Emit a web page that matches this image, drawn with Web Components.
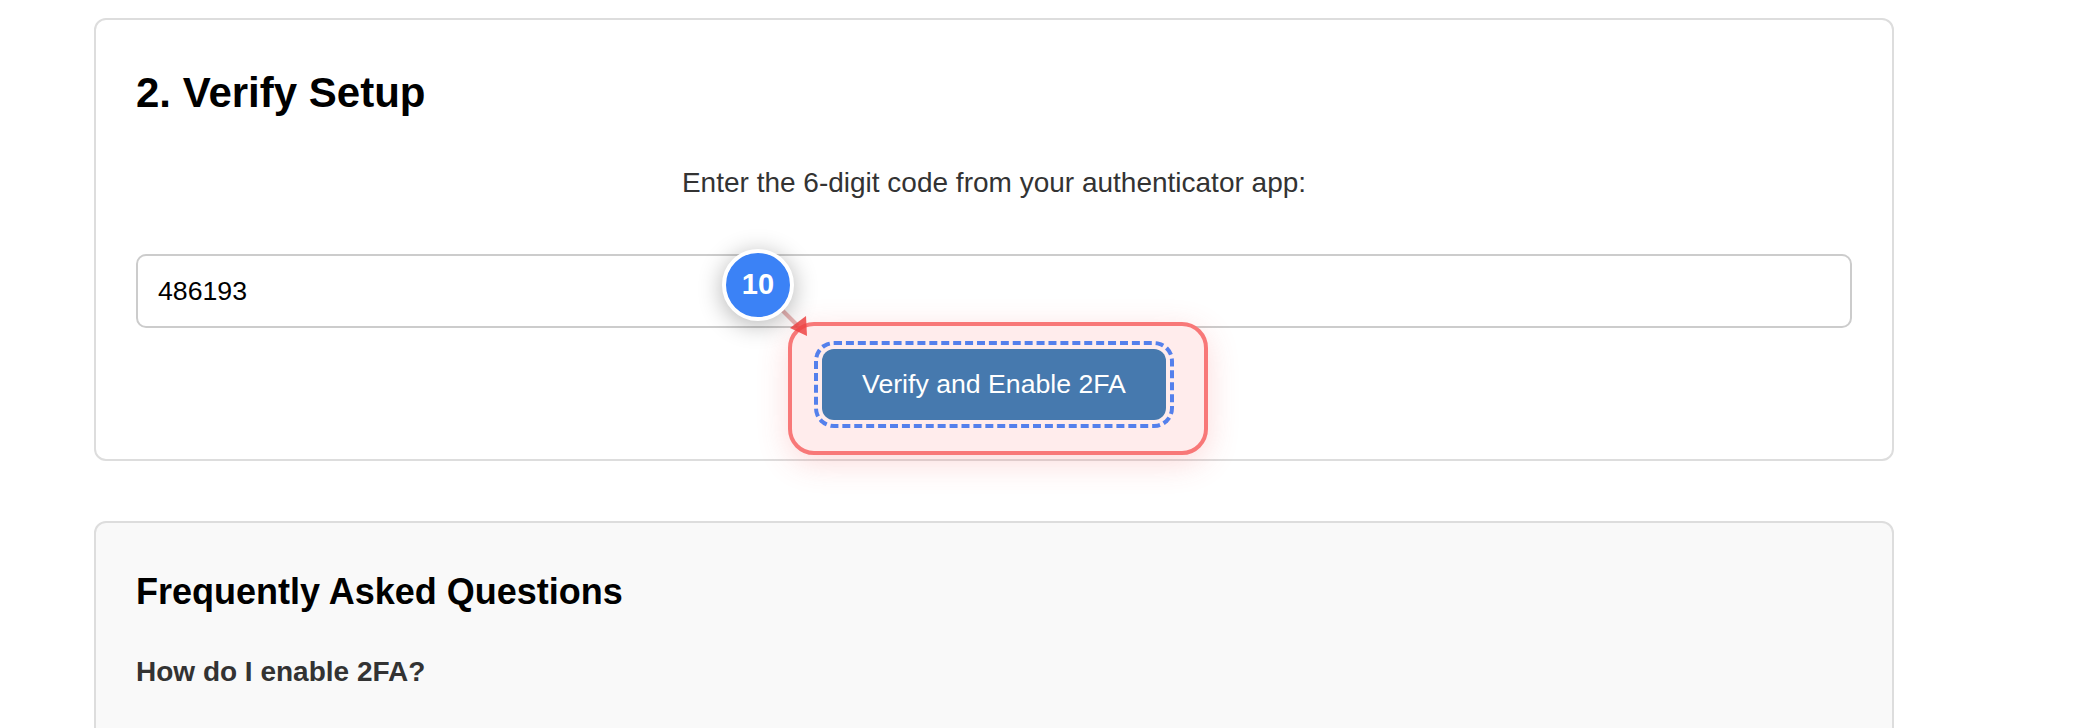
<!DOCTYPE html>
<html><head><meta charset="utf-8"><style>
html,body{margin:0;padding:0;background:#fff;overflow:hidden;height:100%}
body{font-family:"Liberation Sans",Arial,sans-serif;color:#333}
</style></head><body>
<template id="tp-page"><style>
:host{display:block;position:relative;box-sizing:border-box;height:728px;overflow:hidden;width:1900px;padding-left:94px;padding-top:18px}
.stack{display:flex;flex-direction:column;gap:60px;width:1800px}
.layer{position:absolute;left:94px;top:0}
</style><div class="stack"><slot></slot></div><div class="layer"><slot name="overlay"></slot></div></template>

<template id="tp-card"><style>
:host{display:block;box-sizing:border-box;border:2px solid #ddd;border-radius:12px;padding:40px 40px 39px;background:#fff}
:host([muted]){background:#f9f9f9}
</style><slot></slot></template>

<template id="tp-verify"><style>
:host{display:block}
h2{margin:9px 0 0;font-size:42px;line-height:48px;font-weight:700;color:#000}
p{margin:50px 0 0;text-align:center;font-size:28px;line-height:32px;color:#333}
.input{box-sizing:border-box;margin-top:55px;height:74px;border:2px solid #ccc;border-radius:10px;padding:0 20px;display:flex;align-items:center;font-size:26.7px;color:#000;background:#fff}
.row{display:flex;justify-content:center;margin-top:21px}
button{position:relative;z-index:2;box-sizing:border-box;width:344px;height:71px;border:0;border-radius:12px;background:#4679ae;color:#fff;font:26.67px "Liberation Sans",Arial,sans-serif;outline:4px dashed #5480ec;outline-offset:4px;padding:0 0 1px}
</style><h2>2. Verify Setup</h2><p>Enter the 6-digit code from your authenticator app:</p>
<div class="input">486193</div><div class="row"><button>Verify and Enable 2FA</button></div></template>

<template id="tp-faq"><style>
:host{display:block;min-height:300px}
h3{margin:8px 0 0;font-size:36px;line-height:42px;font-weight:700;color:#000}
h4{margin:42.6px 0 0;font-size:28px;line-height:32px;font-weight:700;color:#333}
</style><h3>Frequently Asked Questions</h3><h4>How do I enable 2FA?</h4></template>

<template id="tp-hl"><style>
:host{display:block;position:absolute;z-index:1;box-sizing:border-box;left:694px;top:322px;width:420px;height:133px;border:4px solid #f87878;border-radius:26px;background:#ffecec;box-shadow:0 8px 32px rgba(239,68,68,.2);pointer-events:none}
</style></template>

<template id="tp-arrow"><style>
:host{display:block;position:absolute;z-index:3;left:0;top:0;width:0;height:0}
svg{position:absolute;left:680px;top:300px;overflow:visible}
</style><svg width="40" height="40" viewBox="0 0 40 40"><line x1="8" y1="10" x2="24" y2="26" stroke="rgba(200,80,80,.42)" stroke-width="4"/><polygon points="32,16 16,28 33,36" fill="rgba(239,68,68,.85)"/></svg></template>

<template id="tp-badge"><style>
:host{display:flex;position:absolute;z-index:4;box-sizing:border-box;left:628px;top:249px;width:72px;height:72px;border:4px solid #fff;border-radius:50%;background:#3b82f6;color:#fff;align-items:center;justify-content:center;padding-bottom:2px;font-size:29px;font-weight:700;box-shadow:0 4px 24px rgba(0,0,0,.3)}
</style><slot></slot></template>

<x-page>
  <x-card><x-verify></x-verify></x-card>
  <x-card muted><x-faq></x-faq></x-card>
  <x-highlight slot="overlay"></x-highlight>
  <x-arrow slot="overlay"></x-arrow>
  <x-badge slot="overlay">10</x-badge>
</x-page>
<script>
for(const [n,t] of [['x-page','tp-page'],['x-card','tp-card'],['x-verify','tp-verify'],['x-faq','tp-faq'],['x-highlight','tp-hl'],['x-arrow','tp-arrow'],['x-badge','tp-badge']]){
  customElements.define(n,class extends HTMLElement{constructor(){super();this.attachShadow({mode:'open'}).appendChild(document.getElementById(t).content.cloneNode(true));}});
}
</script>
</body></html>
